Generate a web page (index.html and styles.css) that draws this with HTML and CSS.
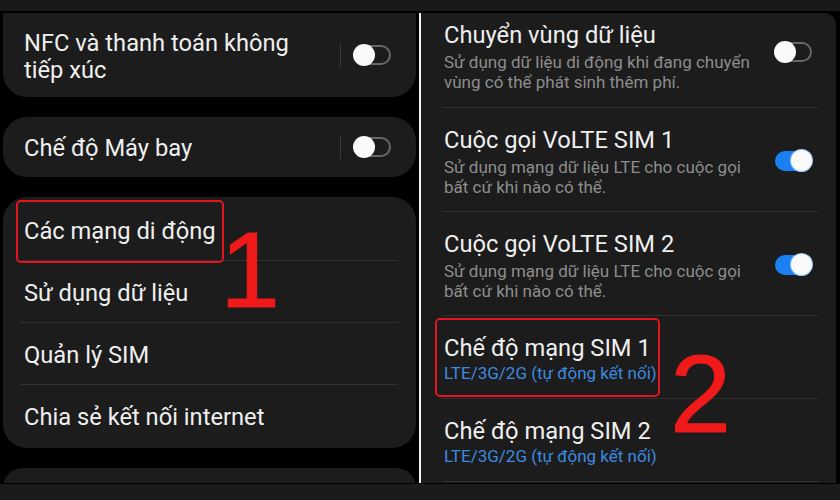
FILE: index.html
```html
<!DOCTYPE html>
<html lang="vi">
<head>
<meta charset="utf-8">
<title>Cài đặt kết nối</title>
<link rel="stylesheet" href="styles.css">
</head>
<body>
<div class="strip strip-top"></div>
<div class="frame">
  <section class="left">
    <div class="card card-cut">
      <div class="row row-multi">
        <span class="title">NFC và thanh toán không<br>tiếp xúc</span>
        <span class="vbar"></span>
        <span class="switch"><span class="knob"></span></span>
      </div>
    </div>
    <div class="card">
      <div class="row row-single">
        <span class="title">Chế độ Máy bay</span>
        <span class="vbar"></span>
        <span class="switch"><span class="knob"></span></span>
      </div>
    </div>
    <div class="card card-list">
      <div class="item"><span class="title">Các mạng di động</span><span class="mark mark-1"></span></div>
      <div class="sep sep-left"></div>
      <div class="item"><span class="title">Sử dụng dữ liệu</span></div>
      <div class="sep sep-left"></div>
      <div class="item"><span class="title">Quản lý SIM</span></div>
      <div class="sep sep-left"></div>
      <div class="item"><span class="title">Chia sẻ kết nối internet</span></div>
    </div>
    <div class="card card-next"></div>
  </section>
  <div class="divider"></div>
  <section class="right">
    <div class="panel">
      <div class="opt opt-first">
        <div class="text">
          <div class="otitle">Chuyển vùng dữ liệu</div>
          <div class="osub">Sử dụng dữ liệu di động khi đang chuyển<br>vùng có thể phát sinh thêm phí.</div>
        </div>
        <span class="switch switch-up"><span class="knob"></span></span>
      </div>
      <div class="sep sep-right"></div>
      <div class="opt">
        <div class="text">
          <div class="otitle">Cuộc gọi VoLTE SIM 1</div>
          <div class="osub">Sử dụng mạng dữ liệu LTE cho cuộc gọi<br>bất cứ khi nào có thể.</div>
        </div>
        <span class="switch on"><span class="knob"></span></span>
      </div>
      <div class="sep sep-right"></div>
      <div class="opt">
        <div class="text">
          <div class="otitle">Cuộc gọi VoLTE SIM 2</div>
          <div class="osub">Sử dụng mạng dữ liệu LTE cho cuộc gọi<br>bất cứ khi nào có thể.</div>
        </div>
        <span class="switch on"><span class="knob"></span></span>
      </div>
      <div class="sep sep-right"></div>
      <div class="opt opt-short">
        <div class="text">
          <div class="otitle">Chế độ mạng SIM 1</div>
          <div class="blue">LTE/3G/2G (tự động kết nối)</div>
        </div>
        <span class="mark mark-2"></span>
      </div>
      <div class="sep sep-right"></div>
      <div class="opt opt-short">
        <div class="text">
          <div class="otitle">Chế độ mạng SIM 2</div>
          <div class="blue">LTE/3G/2G (tự động kết nối)</div>
        </div>
      </div>
      <div class="sep sep-right"></div>
    </div>
  </section>
  <span class="num num-1">1</span>
  <span class="num num-2">2</span>
</div>
<div class="strip strip-bottom"></div>
</body>
</html>
```
FILE: styles.css
```css
* { box-sizing: border-box; }
html, body { margin: 0; padding: 0; }
body {
  width: 840px;
  height: 500px;
  overflow: hidden;
  background: #191919;
  font-family: Roboto, "Noto Sans", "DejaVu Sans", sans-serif;
  color: #eeeeee;
  display: flex;
  flex-direction: column;
}
.strip-top { height: 11px; background: #191919; }
.strip-bottom { flex: 1; background: #1b1b1b; }
.frame {
  position: relative;
  height: 473px;
  border-top: 2px solid #000;
  border-bottom: 1px solid #000;
  display: flex;
  background: #000;
}
.left {
  width: 419px;
  display: flex;
  flex-direction: column;
  gap: 20px;
  padding: 0 3px 0 3px;
  overflow: hidden;
}
.divider { width: 2px; background: #f2f2f2; }
.right {
  flex: 1;
  padding-right: 4px;
  overflow: hidden;
}
.card {
  background: #1c1c1c;
  border-radius: 24px;
  flex-shrink: 0;
}
.card-cut { border-radius: 0 0 24px 24px; }
.card-next { height: 40px; }
.row {
  display: flex;
  align-items: center;
  padding: 0 25px 0 21px;
}
.row-multi { height: 84px; }
.row-single { height: 60px; }
.title {
  font-size: 23.7px;
  line-height: 27px;
  color: #efefef;
  flex: 1;
  padding-top: 3px;
}
.vbar {
  width: 1px;
  height: 24px;
  background: #3a3a3a;
  margin-right: 13px;
}
.switch {
  position: relative;
  width: 37px;
  height: 20px;
  border: 2px solid #686868;
  border-radius: 11px;
  flex-shrink: 0;
}
.knob {
  position: absolute;
  width: 22px;
  height: 22px;
  border-radius: 50%;
  background: #fafafa;
  top: -3px;
  left: -3px;
}
.switch.on {
  background: #1a80f2;
  border-color: #1a80f2;
}
.switch.on .knob { left: auto; right: -2px; top: -3px; width: 21px; height: 21px; box-shadow: 0 0 0 1px #9cc9ff; }
.switch-up { margin-bottom: 8px; }
.card-list { padding: 2px 0; }
.item {
  position: relative;
  height: 61px;
  display: flex;
  align-items: center;
  padding-left: 21px;
}
.sep { height: 1px; background: #313131; }
.sep-left { margin: 0 18px 0 17px; }
.sep-right { margin: 0 18px 0 21px; }
.mark {
  position: absolute;
  border: 2px solid #e3151f;
  border-radius: 5px;
}
.mark-1 { left: 13px; top: 1px; width: 208px; height: 63px; }
.mark-2 { left: 14px; top: 2px; width: 225px; height: 79px; }
.panel {
  background: #1c1c1c;
  border-radius: 0 12px 0 0;
  height: 100%;
}
.opt {
  position: relative;
  display: flex;
  align-items: center;
  padding: 17px 24px 14px 23px;
}
.opt-first { padding-top: 7px; padding-bottom: 15px; }
.opt-short { padding-bottom: 15px; }
.text { flex: 1; }
.otitle {
  font-size: 23.7px;
  line-height: 30px;
  color: #efefef;
}
.osub {
  font-size: 17px;
  line-height: 20px;
  color: #8d8d8d;
  margin-top: 2px;
}
.blue {
  font-size: 17px;
  line-height: 20px;
  color: #3c8ae0;
}
.num {
  position: absolute;
  font-family: "Liberation Sans", Arial, sans-serif;
  font-weight: 400;
  line-height: 1;
  color: #f01a1a;
  -webkit-text-stroke: 1px #f01a1a;
}
.num-1 { left: 220px; top: 203px; font-size: 108px; }
.num-2 { left: 670px; top: 326px; font-size: 110px; }
```
